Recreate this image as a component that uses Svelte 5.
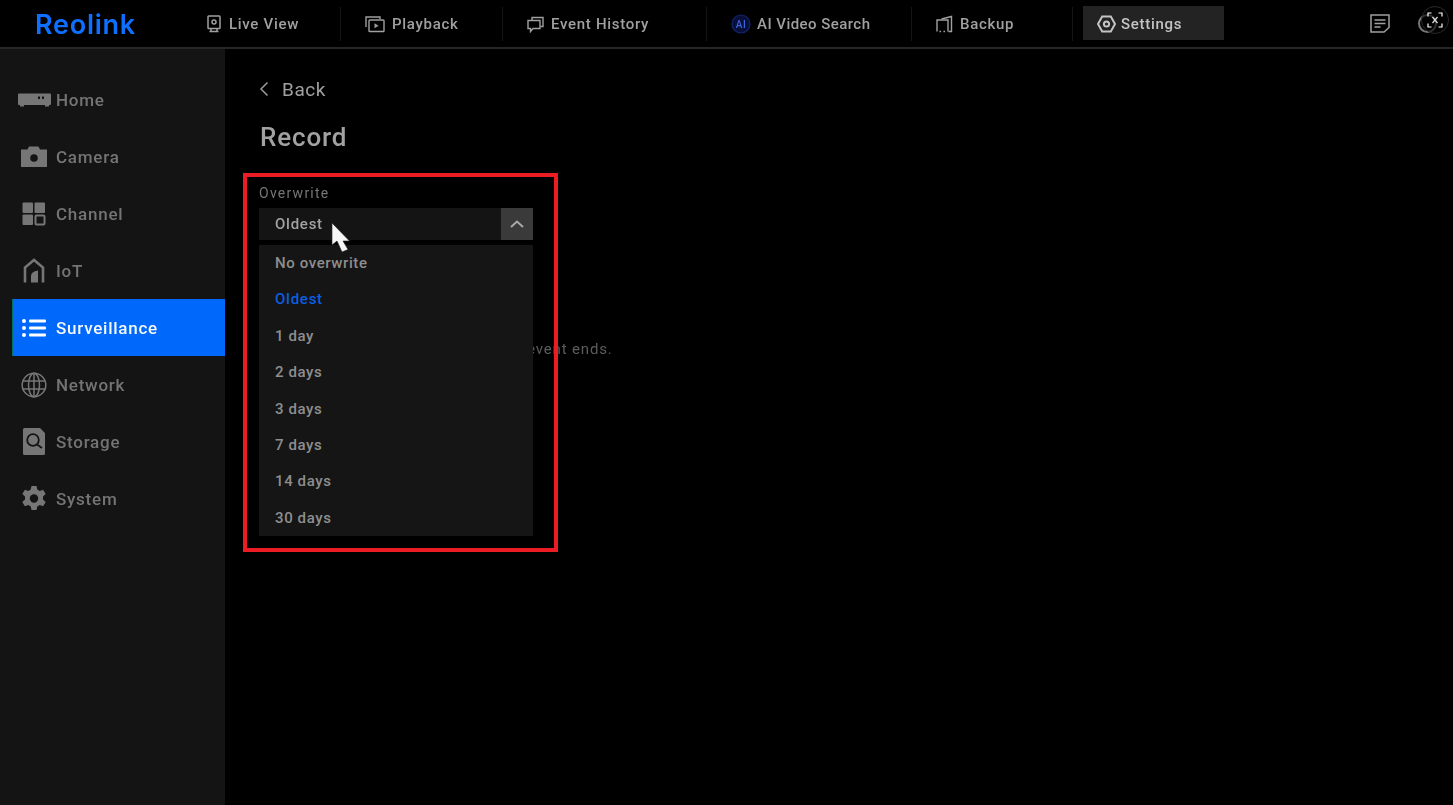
<script>
  const navItems = [
    { label: "Live View", icon: "live", width: 159 },
    { label: "Playback", icon: "play", width: 162 },
    { label: "Event History", icon: "event", width: 204 },
    { label: "AI Video Search", icon: "ai", width: 205 },
    { label: "Backup", icon: "backup", width: 161 }
  ];

  const sideItems = [
    { label: "Home", icon: "home" },
    { label: "Camera", icon: "camera" },
    { label: "Channel", icon: "channel" },
    { label: "IoT", icon: "iot" },
    { label: "Surveillance", icon: "list", active: true },
    { label: "Network", icon: "globe" },
    { label: "Storage", icon: "storage" },
    { label: "System", icon: "gear" }
  ];

  const options = ["No overwrite", "Oldest", "1 day", "2 days", "3 days", "7 days", "14 days", "30 days"];
</script>

{#snippet navIcon(name)}
  {#if name === "live"}
    <svg width="16" height="18" viewBox="0 0 16 18" fill="none" stroke="currentColor" stroke-width="1.5">
      <rect x="2" y="1" width="12" height="12.5" rx="0.8" />
      <circle cx="8" cy="7" r="2" />
      <path d="M3.5 16.5h9M5 14v2.5M11 14v2.5" />
    </svg>
  {:else if name === "play"}
    <svg width="20" height="18" viewBox="0 0 20 18" fill="none" stroke="currentColor" stroke-width="1.4">
      <path d="M1 12V2h14v2" />
      <rect x="4" y="5" width="15" height="11.5" rx="0.8" />
      <path d="M9.5 8.2v5l4-2.5z" fill="currentColor" stroke="none" />
    </svg>
  {:else if name === "event"}
    <svg width="17" height="17" viewBox="0 0 17 17" fill="none" stroke="currentColor" stroke-width="1.4">
      <path d="M5 4V1.5h11v9h-2.5" />
      <path d="M1 4.5h12v8H6l-2.5 3v-3H1z" />
    </svg>
  {:else if name === "ai"}
    <svg width="20" height="20" viewBox="0 0 20 20" fill="none">
      <circle cx="10" cy="10" r="9" fill="#08103a" stroke="#14266e" stroke-width="1.2" />
      <text x="10" y="14" text-anchor="middle" font-size="10" font-family="Roboto, sans-serif" fill="#3f63d8">AI</text>
    </svg>
  {:else if name === "backup"}
    <svg width="17" height="18" viewBox="0 0 17 18" fill="none" stroke="currentColor" stroke-width="1.4">
      <path d="M5.5 4L15.5 1.500v15h-3" />
      <path d="M1 16.500V5h11v11.500" />
      <path d="M3.500 16.500h1.500M7.500 16.500h1.500" />
    </svg>
  {:else if name === "gear"}
    <svg width="19" height="18" viewBox="0 0 19 18" fill="none" stroke="currentColor" stroke-width="2">
      <path d="M5.2 1.5h8.6l4.2 7.5-4.2 7.5H5.2L1 9z" />
      <circle cx="9.5" cy="9" r="2.6" />
    </svg>
  {/if}
{/snippet}

{#snippet sideIcon(name)}
  {#if name === "home"}
    <svg width="33" height="16" viewBox="0 0 33 16" fill="currentColor">
      <path d="M1 1.5h31a1 1 0 0 1 1 1V12a1 1 0 0 1-1 1h-1v1.5h-4V13H6v1.5H2V13H1a1 1 0 0 1-1-1V2.500a1 1 0 0 1 1-1z" />
      <rect x="20" y="4.500" width="2" height="2.500" fill="#141414" />
      <rect x="24" y="4.500" width="2" height="2.500" fill="#141414" />
    </svg>
  {:else if name === "camera"}
    <svg width="26" height="22" viewBox="0 0 26 22" fill="currentColor">
      <path d="M0 3.500h6.500L8 .5h9.500l1.500 3h7V21H0z" />
      <circle cx="13" cy="12" r="3.800" fill="#141414" />
    </svg>
  {:else if name === "channel"}
    <svg width="24" height="24" viewBox="0 0 24 24" fill="currentColor">
      <rect x="0.500" y="0.500" width="10.500" height="10.500" rx="1" />
      <rect x="12.500" y="0.500" width="10.500" height="10.500" rx="1" />
      <rect x="0.500" y="12.500" width="10.500" height="10.500" rx="1" />
      <rect x="13.500" y="13.500" width="9" height="9" rx="1" fill="none" stroke="currentColor" stroke-width="2" />
    </svg>
  {:else if name === "iot"}
    <svg width="22" height="25" viewBox="0 0 22 25" fill="none" stroke="currentColor" stroke-width="2.600">
      <path d="M2 24.500V9.500L11 2l9 7.500v15" />
      <path d="M8 24.500v-6.500q0-4.500 7-5.500v12z" fill="currentColor" stroke="none" />
    </svg>
  {:else if name === "list"}
    <svg width="24" height="20" viewBox="0 0 24 20" fill="#fff">
      <circle cx="2" cy="3" r="2" />
      <circle cx="2" cy="10" r="2" />
      <circle cx="2" cy="17" r="2" />
      <rect x="7" y="1.500" width="17" height="3" rx="1" />
      <rect x="7" y="8.500" width="17" height="3" rx="1" />
      <rect x="7" y="15.500" width="17" height="3" rx="1" />
    </svg>
  {:else if name === "globe"}
    <svg width="26" height="26" viewBox="0 0 26 26" fill="none" stroke="currentColor" stroke-width="1.500">
      <circle cx="13" cy="13" r="11.800" />
      <ellipse cx="13" cy="13" rx="5.500" ry="11.800" />
      <path d="M13 1v24M1.500 9h23M1.500 17h23" />
    </svg>
  {:else if name === "storage"}
    <svg width="22" height="27" viewBox="0 0 22 27" fill="currentColor">
      <path d="M1.500 0H17l5 5v20.500a1.500 1.500 0 0 1-1.500 1.500h-19A1.500 1.500 0 0 1 0 25.500v-24A1.500 1.500 0 0 1 1.500 0z" />
      <circle cx="10" cy="12" r="5.800" fill="none" stroke="#141414" stroke-width="1.800" />
      <path d="M14 16.500l5 3.500" stroke="#141414" stroke-width="1.800" />
    </svg>
  {:else if name === "gear"}
    <svg width="26" height="27" viewBox="0 0 26 27" fill="currentColor">
      <path d="M10.500.5h5l.8 3.600 2.400 1.300 3.400-1.200 2.600 4.400-2.700 2.500v2.800l2.700 2.500-2.600 4.400-3.400-1.200-2.400 1.300-.8 3.600h-5l-.8-3.600-2.400-1.300-3.400 1.200-2.600-4.400 2.700-2.500v-2.800L1.300 8.600l2.600-4.400 3.400 1.200 2.400-1.300z" transform="translate(0 .5)" />
      <circle cx="13" cy="13.500" r="4.200" fill="#141414" />
    </svg>
  {/if}
{/snippet}

<div class="page">
  <div class="capture">
    <header class="topbar">
      <div class="brand">Reolink</div>
      <nav class="nav">
        {#each navItems as item}
          <div class="nav-item" class:ai-item={item.icon === "ai"} style="width: {item.width}px">
            <span class="nav-icon">{@render navIcon(item.icon)}</span>
            <span>{item.label}</span>
          </div>
        {/each}
        <div class="nav-item settings">
          <span class="nav-icon">{@render navIcon("gear")}</span>
          <span>Settings</span>
        </div>
      </nav>
      <div class="top-actions">
        <svg width="20" height="19" viewBox="0 0 20 19" fill="none" stroke="#a0a0a0" stroke-width="1.500">
          <path d="M1 1h18v12.500L14 18H1z" />
          <path d="M4.500 6h11M4.500 9.500h11M4.500 13h6" />
        </svg>
      </div>
    </header>

    <div class="body">
      <aside class="sidebar">
        {#each sideItems as item}
          <div class="side-item" class:active={item.active}>
            <span class="side-icon">{@render sideIcon(item.icon)}</span>
            <span>{item.label}</span>
          </div>
        {/each}
      </aside>

      <main class="content">
        <div class="back">
          <svg width="10" height="16" viewBox="0 0 10 16" fill="none" stroke="#9a9a9a" stroke-width="1.500">
            <path d="M8.500 1.500L2 8l6.500 6.500" />
          </svg>
          <span>Back</span>
        </div>
        <h1>Record</h1>

        <div class="field">
          <div class="field-label">Overwrite</div>
          <div class="select">
            <span class="select-value">Oldest</span>
            <span class="select-arrow">
              <svg width="14" height="8" viewBox="0 0 14 8" fill="none" stroke="#a8a8a8" stroke-width="2">
                <path d="M1 7l6-5.500L13 7" />
              </svg>
            </span>
          </div>
          <div class="field-behind">
            <ul class="menu">
              {#each options as option}
                <li class:picked={option === "Oldest"}>{option}</li>
              {/each}
            </ul>
            <div class="hint">event ends.</div>
          </div>
        </div>
      </main>
    </div>

    <div class="user-ring"></div>
  </div>

  <!-- annotation and pointer sit on top of the capture -->
  <div class="frame"></div>
  <svg class="pointer" width="20" height="32" viewBox="0 0 20 32">
    <path d="M1 1V23L6 19L11 30L17 27.500L12 19H18.500Z" fill="#f6f6f6" stroke="#222" stroke-width="0.600" />
  </svg>
  <div class="fs-button">
    <svg width="28" height="28" viewBox="0 0 28 28" fill="none">
      <circle cx="14" cy="14" r="13.500" fill="#000" fill-opacity="0.600" stroke="#2a2a2a" />
      <path d="M7 10.500V7h3.500M17.500 7H21v3.500M21 17.500V21h-3.500M10.500 21H7v-3.500" stroke="#fff" stroke-width="1.200" />
      <path d="M11.500 11l5 6M16.500 11l-5 6" stroke="#ddd" stroke-width="1.200" />
    </svg>
  </div>
</div>

<style>
  :global(body) {
    margin: 0;
    background: #000;
  }

  .page {
    position: relative;
    width: 1453px;
    height: 805px;
    overflow: hidden;
    background: #000;
    font-family: Roboto, "Liberation Sans", sans-serif;
    color: #8a8a8a;
  }

  /* the reference is a soft video frame */
  .capture {
    position: relative;
    height: 100%;
    filter: blur(0.5px);
  }

  .topbar {
    display: flex;
    align-items: center;
    height: 47px;
    border-bottom: 2px solid #262626;
  }

  .brand {
    flex: none;
    width: 182px;
    box-sizing: border-box;
    padding-left: 35px;
    padding-top: 2px;
    font-family: Inter, Roboto, sans-serif;
    font-size: 27px;
    font-weight: 600;
    letter-spacing: 0.75px;
    color: #0f6fff;
    line-height: 1;
  }

  .nav {
    display: flex;
    align-items: center;
    height: 100%;
  }

  .nav-item {
    display: flex;
    align-items: center;
    gap: 7px;
    box-sizing: border-box;
    height: 34px;
    padding-left: 24px;
    padding-top: 1px;
    font-size: 15px;
    font-weight: 500;
    letter-spacing: 0.7px;
    color: #a0a0a0;
    box-shadow: inset -1px 0 0 #151515;
  }

  .nav-item.ai-item {
    gap: 6px;
    letter-spacing: 0.45px;
  }

  .nav-icon {
    display: flex;
    align-items: center;
  }

  .nav-item.settings {
    width: 141px;
    margin-left: 10px;
    padding-left: 14px;
    background: #232323;
    color: #c4c4c4;
    box-shadow: none;
    gap: 5px;
    margin-top: -1px;
  }

  .top-actions {
    margin-left: auto;
    margin-right: 63px;
    display: flex;
  }

  .body {
    display: flex;
    height: 756px;
  }

  .sidebar {
    width: 225px;
    flex: none;
    box-sizing: border-box;
    padding: 22px 0 0 12px;
    background: #141414;
  }

  .side-item {
    display: flex;
    align-items: center;
    height: 57px;
    font-size: 17px;
    font-weight: 500;
    letter-spacing: 0.75px;
    color: #747474;
  }

  .side-icon {
    flex: none;
    width: 44px;
    display: flex;
    justify-content: center;
    color: #767676;
  }

  .side-item.active {
    background: #0068fb;
    color: #f4f8ff;
    box-shadow: inset 1px 0 0 #05705f;
  }

  .content {
    flex: 1;
    padding: 30px 0 0 34px;
  }

  .back {
    display: flex;
    align-items: center;
    gap: 13px;
    height: 20px;
    font-size: 19px;
    color: #a0a0a0;
    letter-spacing: 0.55px;
  }

  h1 {
    margin: 23px 0 0 1px;
    font-size: 26px;
    line-height: 30px;
    font-weight: 500;
    color: #a2a2a2;
    letter-spacing: 0.85px;
  }

  .field {
    margin-top: 34px;
    width: 274px;
  }

  .field-label {
    height: 15px;
    line-height: 15px;
    font-size: 14px;
    letter-spacing: 1.25px;
    color: #767676;
    margin-bottom: 7px;
  }

  .select {
    display: flex;
    align-items: center;
    justify-content: space-between;
    height: 32px;
    background: #141414;
    font-size: 15px;
    font-weight: 500;
    letter-spacing: 0.75px;
    color: #a2a2a2;
  }

  .select-value {
    padding-left: 16px;
  }

  .select-arrow {
    display: flex;
    align-items: center;
    justify-content: center;
    width: 32px;
    height: 32px;
    background: #3a3a3a;
  }

  .field-behind {
    position: relative;
    margin-top: 5px;
  }

  .menu {
    position: relative;
    z-index: 1;
    list-style: none;
    margin: 0;
    padding: 0;
    background: #151515;
  }

  .menu li {
    height: 36.400px;
    line-height: 36.400px;
    padding-left: 16px;
    font-size: 15px;
    font-weight: 500;
    letter-spacing: 0.6px;
    color: #8e8e8e;
  }

  .menu li.picked {
    color: #0a5fe0;
    letter-spacing: 0.75px;
  }

  .hint {
    position: absolute;
    left: 268px;
    top: 95px;
    font-size: 15px;
    letter-spacing: 0.85px;
    color: #5c5c5c;
    white-space: nowrap;
  }

  .frame {
    position: absolute;
    left: 243px;
    top: 173px;
    width: 315px;
    height: 379px;
    box-sizing: border-box;
    border: 4px solid #ec1c24;
  }

  .pointer {
    position: absolute;
    left: 331px;
    top: 222px;
  }

  .fs-button {
    position: absolute;
    left: 1421px;
    top: 6px;
    display: flex;
  }

  .user-ring {
    position: absolute;
    left: 1418px;
    top: 14px;
    width: 19px;
    height: 19px;
    border-radius: 50%;
    border: 2px solid #777;
    box-sizing: border-box;
  }
</style>
